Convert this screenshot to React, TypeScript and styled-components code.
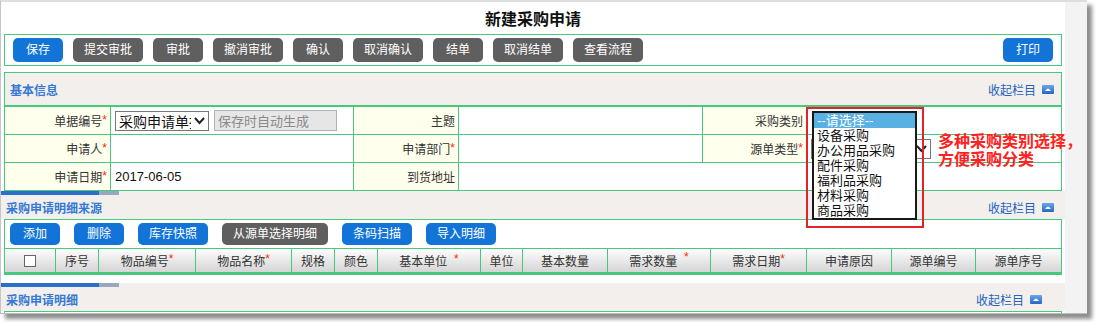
import * as React from 'react'
import styled, { createGlobalStyle } from 'styled-components'

const GREEN = '#46c87d'

const GlobalStyle = createGlobalStyle`
  html, body {
    margin: 0;
    padding: 0;
    background: #fff;
  }
  body {
    font-family: 'Liberation Sans', 'Noto Sans CJK SC', sans-serif;
    font-size: 12px;
    color: #333;
  }
`

const Stage = styled.div`
  width: 1097px;
  height: 322px;
  background: #fff;
  overflow: hidden;
`

const Window = styled.div`
  position: relative;
  display: flex;
  align-items: flex-start;
  width: 1086px;
  height: 311px;
  border-left: 1px solid #c6c6c6;
  border-top: 2px solid #dedede;
  border-bottom: 1px solid #bdbdbd;
  background: #fff;
  box-shadow: 5px 5px 4px rgba(0, 0, 0, 0.45);
  overflow: hidden;
`

const Content = styled.div`
  width: 1064px;
  flex: none;
`

const SideStrip = styled.div`
  flex: 1;
  align-self: stretch;
  background: #f3f3f3;
`

const Title = styled.h1`
  margin: 0;
  height: 32px;
  display: flex;
  align-items: center;
  justify-content: center;
  font-size: 16px;
  font-weight: bold;
  color: #111;
`

const Toolbar = styled.div`
  margin: 0 3px;
  height: 30px;
  border: 1px solid ${GREEN};
  display: flex;
  align-items: center;
  gap: 10px;
  padding: 0 8px;
`

const Btn = styled.button<{ $tone?: 'blue' | 'gray'; $w: number; $h?: number }>`
  width: ${p => p.$w}px;
  height: ${p => p.$h || 24}px;
  flex: none;
  border: none;
  border-radius: 5px;
  padding: 0;
  background: ${p => (p.$tone === 'gray' ? '#5f5f5f' : '#1374d8')};
  color: #fff;
  font-family: inherit;
  font-size: 12px;
  line-height: 1;
  cursor: pointer;
`

const PrintBtn = styled(Btn)`
  margin-left: auto;
`

const InfoBox = styled.div`
  margin: 6px 3px 0;
  border: 1px solid ${GREEN};
  border-bottom: none;
`

const SectionHead = styled.div<{ $h: number; $padRight: number }>`
  height: ${p => p.$h}px;
  background: #f2efec;
  display: flex;
  align-items: center;
  justify-content: space-between;
  padding: 0 ${p => p.$padRight}px 0 5px;
`

const SectionName = styled.span`
  font-size: 12px;
  font-weight: bold;
  color: #3479d4;
`

const Collapse = styled.a`
  display: flex;
  align-items: center;
  gap: 6px;
  color: #2262c2;
  font-size: 12px;
  text-decoration: none;
`

const FormGrid = styled.div`
  display: grid;
  grid-template-columns: 106px 243px 105px 244px 104px 1fr;
  border-top: 2px solid ${GREEN};
`

const Cell = styled.div<{ $label?: boolean; $last?: boolean; $span?: number }>`
  position: relative;
  height: 27px;
  border-bottom: 1px solid ${GREEN};
  border-right: ${p => (p.$last ? 'none' : `1px solid ${GREEN}`)};
  grid-column: ${p => (p.$span ? `span ${p.$span}` : 'auto')};
  background: ${p => (p.$label ? '#ffffee' : '#fff')};
  display: flex;
  align-items: center;
  justify-content: ${p => (p.$label ? 'flex-end' : 'flex-start')};
  padding: ${p => (p.$label ? '0 3px 0 0' : '0 0 0 4px')};
  gap: 5px;
  font-size: 12px;
  color: #333;
`

const Star = styled.span`
  color: #ff2a00;
  position: relative;
  top: -2px;
`

const DateText = styled.span`
  font-size: 13px;
  color: #111;
`

const FakeSelect = styled.div<{ $w: number }>`
  width: ${p => p.$w}px;
  height: 20px;
  box-sizing: border-box;
  border: 1px solid #767676;
  background: #fff;
  display: flex;
  align-items: center;
  padding-left: 3px;
  flex: none;
`

const SelectText = styled.span`
  flex: 1;
  overflow: hidden;
  white-space: nowrap;
  font-size: 14px;
  color: #111;
`

const ReadInput = styled.input`
  width: 123px;
  height: 21px;
  box-sizing: border-box;
  border: 1px solid #b3b3b3;
  background: #e6e6e6;
  color: #8a8a8a;
  font-family: inherit;
  font-size: 13px;
  padding: 0 3px;
`

const Panel = styled.div<{ $padBottom?: number }>`
  background: #fff;
  padding-bottom: ${p => p.$padBottom || 0}px;
`

const TabBar = styled.div`
  height: 4px;
  display: flex;
  background: #f2efec;
`

const TabPiece = styled.div<{ $w: number; $c: string }>`
  width: ${p => p.$w}px;
  background: ${p => p.$c};
`

const DetailBox = styled.div`
  margin: 0 3px;
  border: 1px solid ${GREEN};
  border-bottom: none;
`

const DetailTools = styled.div`
  height: 28px;
  display: flex;
  align-items: center;
  gap: 14px;
  padding: 0 5px;
`

const HeadRow = styled.div<{ $cols: string }>`
  display: grid;
  grid-template-columns: ${p => p.$cols};
  border-top: 1px solid ${GREEN};
  border-bottom: 3px solid ${GREEN};
`

const HeadCell = styled.div<{ $raised?: boolean; $last?: boolean }>`
  height: 23px;
  box-sizing: border-box;
  background: linear-gradient(#fdfdfd, #d5d5d5);
  border-right: ${p => (p.$last ? 'none' : `1px solid ${GREEN}`)};
  display: flex;
  justify-content: center;
  align-items: ${p => (p.$raised ? 'flex-start' : 'center')};
  padding-top: ${p => (p.$raised ? 3 : 0)}px;
  font-size: 12px;
  color: #333;
  white-space: pre;
`

const Check = styled.span`
  width: 12px;
  height: 12px;
  box-sizing: border-box;
  border: 1px solid #666;
  background: #fff;
`

const DropList = styled.div`
  position: absolute;
  left: 5px;
  top: 4px;
  z-index: 3;
  width: 101px;
  border: 2px solid #1a1a1a;
  background: #fff;
`

const DropItem = styled.div<{ $active?: boolean }>`
  height: 15px;
  line-height: 15px;
  padding-left: 3px;
  font-size: 13px;
  white-space: nowrap;
  color: ${p => (p.$active ? '#fff' : '#111')};
  background: ${p => (p.$active ? '#59b0e2' : 'transparent')};
`

const RedFrame = styled.div`
  position: absolute;
  left: -1px;
  top: 0;
  z-index: 4;
  width: 114px;
  height: 117px;
  border: 2px solid #e3222b;
  pointer-events: none;
`

const RedNote = styled.div`
  position: absolute;
  left: 131px;
  top: 26px;
  z-index: 4;
  font-size: 16px;
  line-height: 18px;
  font-weight: bold;
  color: #ff2020;
  white-space: nowrap;
`

const Chevron = () => (
  <svg width='17' height='10' viewBox='0 0 17 10'>
    <path d='M4 2 L8.5 7 L13 2' fill='none' stroke='#222' strokeWidth='2' />
  </svg>
)

const UpIcon = () => (
  <svg width='12' height='9' viewBox='0 0 12 9'>
    <defs>
      <linearGradient id='upg' x1='0' y1='0' x2='0' y2='1'>
        <stop offset='0' stopColor='#6aa6e8' />
        <stop offset='1' stopColor='#2666c4' />
      </linearGradient>
    </defs>
    <rect x='0' y='0' width='12' height='9' rx='1' fill='url(#upg)' />
    <path d='M3 6 L5 3.8 H7 L9 6 Z' fill='#fff' />
  </svg>
)

const Fold = () => (
  <Collapse>
    收起栏目
    <UpIcon />
  </Collapse>
)

const topButtons = [
  { t: '保存', w: 50, tone: 'blue' },
  { t: '提交审批', w: 70, tone: 'gray' },
  { t: '审批', w: 50, tone: 'gray' },
  { t: '撤消审批', w: 70, tone: 'gray' },
  { t: '确认', w: 50, tone: 'gray' },
  { t: '取消确认', w: 70, tone: 'gray' },
  { t: '结单', w: 50, tone: 'gray' },
  { t: '取消结单', w: 70, tone: 'gray' },
  { t: '查看流程', w: 70, tone: 'gray' }
] as const

const detailButtons = [
  { t: '添加', w: 50, tone: 'blue' },
  { t: '删除', w: 50, tone: 'blue' },
  { t: '库存快照', w: 70, tone: 'blue' },
  { t: '从源单选择明细', w: 106, tone: 'gray' },
  { t: '条码扫描', w: 70, tone: 'blue' },
  { t: '导入明细', w: 70, tone: 'blue' }
] as const

const columns = [
  { t: '', w: 51, check: true },
  { t: '序号', w: 43 },
  { t: '物品编号', w: 97, star: '*' },
  { t: '物品名称', w: 96, star: '*' },
  { t: '规格', w: 43 },
  { t: '颜色', w: 43 },
  { t: '基本单位', w: 103, star: '  *' },
  { t: '单位', w: 42, raised: true },
  { t: '基本数量', w: 85 },
  { t: '需求数量', w: 103, star: '  *', raised: true },
  { t: '需求日期', w: 96, star: '*' },
  { t: '申请原因', w: 85 },
  { t: '源单编号', w: 84 },
  { t: '源单序号', w: 85 }
]

const purchaseTypes = ['--请选择--', '设备采购', '办公用品采购', '配件采购', '福利品采购', '材料采购', '商品采购']

const Label: React.FC<{ text: string; req?: boolean }> = ({ text, req }) => (
  <Cell $label>
    <span>
      {text}
      {req && <Star>*</Star>}
    </span>
  </Cell>
)

const SectionBar = () => (
  <TabBar>
    <TabPiece $w={98} $c='#2b6fcb' />
    <TabPiece $w={20} $c='#9aa8be' />
  </TabBar>
)

const App: React.FC = () => {
  const cols = columns.map(c => `${c.w}px`).join(' ')
  return (
    <Stage>
      <GlobalStyle />
      <Window>
        <Content>
          <Title>新建采购申请</Title>

          <Toolbar>
            {topButtons.map(b => (
              <Btn key={b.t} $w={b.w} $tone={b.tone}>
                {b.t}
              </Btn>
            ))}
            <PrintBtn $w={50} $tone='blue'>
              打印
            </PrintBtn>
          </Toolbar>

          <InfoBox>
            <SectionHead $h={32} $padRight={7}>
              <SectionName>基本信息</SectionName>
              <Fold />
            </SectionHead>
            <FormGrid>
              <Label text='单据编号' req />
              <Cell>
                <FakeSelect $w={94}>
                  <SelectText>采购申请单据</SelectText>
                  <Chevron />
                </FakeSelect>
                <ReadInput readOnly defaultValue='保存时自动生成' />
              </Cell>
              <Label text='主题' />
              <Cell />
              <Label text='采购类别' />
              <Cell $last>
                <DropList>
                  {purchaseTypes.map((p, i) => (
                    <DropItem key={p} $active={i === 0}>
                      {p}
                    </DropItem>
                  ))}
                </DropList>
                <RedFrame />
                <RedNote>
                  多种采购类别选择，
                  <br />
                  方便采购分类
                </RedNote>
              </Cell>

              <Label text='申请人' req />
              <Cell />
              <Label text='申请部门' req />
              <Cell />
              <Label text='源单类型' req />
              <Cell $last>
                <FakeSelect $w={120}>
                  <SelectText />
                  <Chevron />
                </FakeSelect>
              </Cell>

              <Label text='申请日期' req />
              <Cell>
                <DateText>2017-06-05</DateText>
              </Cell>
              <Label text='到货地址' />
              <Cell $span={3} $last />
            </FormGrid>
          </InfoBox>

          <Panel $padBottom={8}>
            <SectionBar />
            <SectionHead $h={24} $padRight={11}>
              <SectionName>采购申请明细来源</SectionName>
              <Fold />
            </SectionHead>
            <DetailBox>
              <DetailTools>
                {detailButtons.map(b => (
                  <Btn key={b.t} $w={b.w} $h={22} $tone={b.tone}>
                    {b.t}
                  </Btn>
                ))}
              </DetailTools>
              <HeadRow $cols={cols}>
                {columns.map((c, i) => (
                  <HeadCell key={i} $raised={c.raised} $last={i === columns.length - 1}>
                    {c.check ? <Check /> : c.t}
                    {c.star && <Star>{c.star}</Star>}
                  </HeadCell>
                ))}
              </HeadRow>
            </DetailBox>
          </Panel>

          <Panel>
            <SectionBar />
            <SectionHead $h={24} $padRight={23}>
              <SectionName>采购申请明细</SectionName>
              <Fold />
            </SectionHead>
            <DetailBox>
              <DetailTools />
            </DetailBox>
          </Panel>
        </Content>
        <SideStrip />
      </Window>
    </Stage>
  )
}

export default App
